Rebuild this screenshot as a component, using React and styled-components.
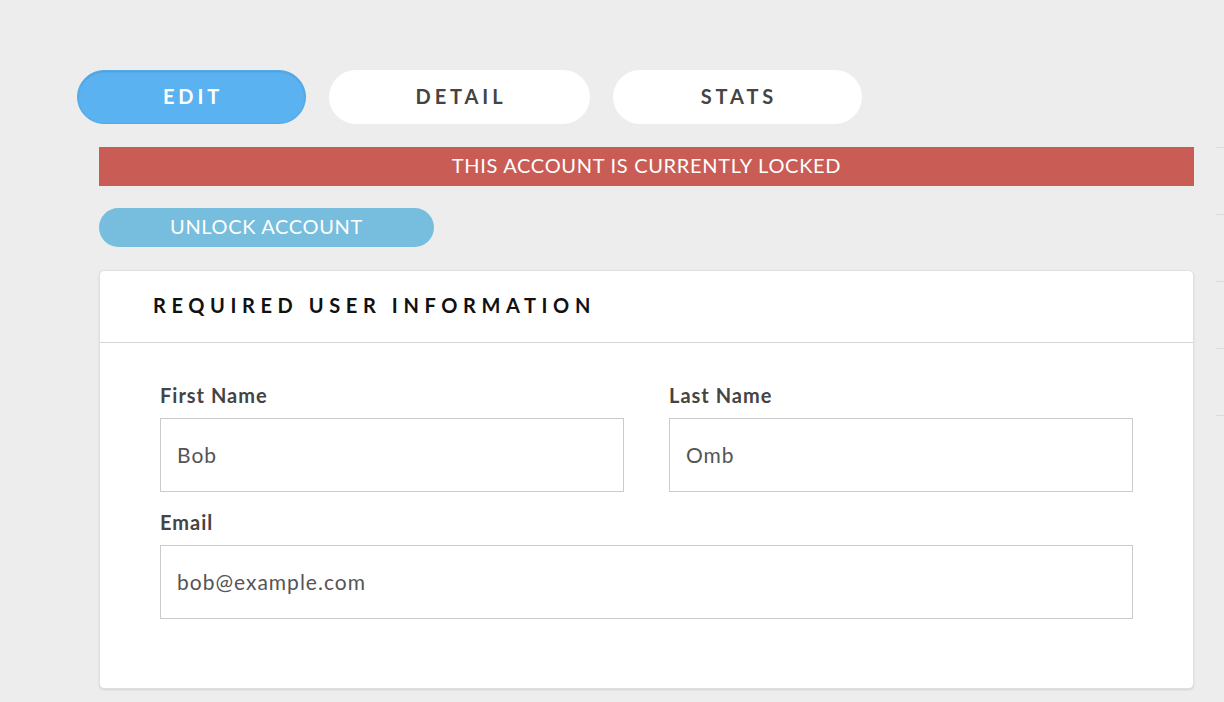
import styled, { createGlobalStyle } from 'styled-components';

const GlobalStyle = createGlobalStyle`
  body {
    margin: 0;
    background: #ededed;
    font-family: Lato, "Open Sans", "Noto Sans", sans-serif;
  }
`;

const tabs = [
  { label: 'EDIT', width: 229, active: true },
  { label: 'DETAIL', width: 261 },
  { label: 'STATS', width: 249 },
];

export default function App() {
  return (
    <Page>
      <GlobalStyle />
      <TabBar>
        {tabs.map((tab) => (
          <Tab key={tab.label} $width={tab.width} $active={tab.active}>{tab.label}</Tab>
        ))}
      </TabBar>
      <Body>
        <Main>
          <LockedBanner>THIS ACCOUNT IS CURRENTLY LOCKED</LockedBanner>
          <UnlockButton>UNLOCK ACCOUNT</UnlockButton>
          <Card>
            <CardHeader>REQUIRED USER INFORMATION</CardHeader>
            <CardBody>
              <Field>
                <Label>First Name</Label>
                <Input defaultValue="Bob" />
              </Field>
              <Field>
                <Label>Last Name</Label>
                <Input defaultValue="Omb" />
              </Field>
              <Field $wide>
                <Label>Email</Label>
                <Input defaultValue="bob@example.com" />
              </Field>
            </CardBody>
          </Card>
        </Main>
        <Ticks>
          {[0, 1, 2, 3, 4].map((i) => <Tick key={i} />)}
        </Ticks>
      </Body>
    </Page>
  );
}

const Page = styled.div`
  padding-top: 70px;
  min-height: 702px;
  box-sizing: border-box;
`;

const TabBar = styled.div`
  display: flex;
  gap: 23px;
  padding-left: 77px;
`;

const Tab = styled.button`
  width: ${props => props.$width}px;
  height: 54px;
  border-radius: 27px;
  border: ${props => props.$active ? '1px solid #53aaea' : 'none'};
  background: ${props => props.$active ? '#5ab2f0' : '#fff'};
  color: ${props => props.$active ? '#fff' : '#444'};
  box-shadow: ${props => props.$active ? 'inset 0 1px 2px rgba(0,0,0,0.12)' : 'none'};
  font-family: inherit;
  font-size: 20px;
  font-weight: 700;
  letter-spacing: 3.9px;
  padding: 0 0 3px 3px;
  cursor: pointer;
`;

const Body = styled.div`
  display: flex;
  gap: 22px;
  padding-left: 99px;
  margin-top: 23px;
`;

const Main = styled.div`
  width: 1095px;
  display: flex;
  flex-direction: column;
  align-items: flex-start;
`;

const LockedBanner = styled.div`
  width: 100%;
  height: 39px;
  box-sizing: border-box;
  padding-bottom: 3px;
  background: #c95c55;
  color: #fff;
  font-size: 20px;
  letter-spacing: 0.7px;
  display: flex;
  align-items: center;
  justify-content: center;
`;

const UnlockButton = styled.button`
  margin-top: 22px;
  width: 335px;
  height: 39px;
  border: none;
  border-radius: 20px;
  background: #77bddd;
  color: #fff;
  font-family: inherit;
  font-size: 20px;
  letter-spacing: 0.65px;
  padding: 0 0 3px;
  cursor: pointer;
`;

const Card = styled.div`
  margin-top: 23px;
  width: 100%;
  height: 419px;
  box-sizing: border-box;
  background: #fff;
  border: 1px solid #e0e0e0;
  border-radius: 5px;
  box-shadow: 0 1px 2px rgba(0,0,0,0.12);
`;

const CardHeader = styled.div`
  height: 72px;
  box-sizing: border-box;
  display: flex;
  align-items: center;
  padding: 0 0 3px 53px;
  border-bottom: 1px solid #d6d6d6;
  font-size: 20px;
  font-weight: 700;
  letter-spacing: 5.6px;
  color: #111;
`;

const CardBody = styled.div`
  display: grid;
  grid-template-columns: 1fr 1fr;
  column-gap: 45px;
  row-gap: 18px;
  padding: 40px 60px 0;
`;

const Field = styled.div`
  grid-column: ${props => props.$wide ? '1 / -1' : 'auto'};
  display: flex;
  flex-direction: column;
`;

const Label = styled.label`
  font-size: 20px;
  font-weight: 700;
  letter-spacing: 1px;
  color: #444;
  line-height: 24px;
  margin-bottom: 11px;
`;

const Input = styled.input`
  height: 74px;
  box-sizing: border-box;
  border: 1px solid #cbcbcb;
  padding: 0 16px 2px;
  font-family: inherit;
  font-size: 21px;
  letter-spacing: 1px;
  color: #555;
  outline: none;
`;

const Ticks = styled.div`
  flex: 1;
  display: flex;
  flex-direction: column;
`;

const Tick = styled.div`
  height: 66px;
  border-top: 1px solid #dadada;
`;
